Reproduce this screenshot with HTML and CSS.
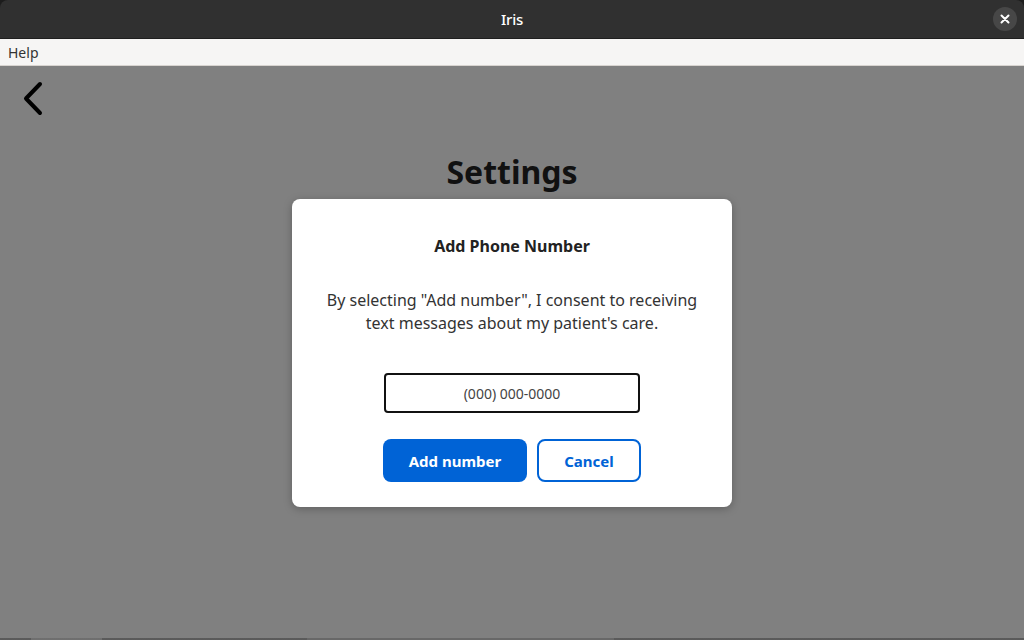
FILE: index.html
```html
<!DOCTYPE html>
<html>
<head>
<meta charset="utf-8">
<link rel="stylesheet" href="styles.css">
</head>
<body>
<div class="window">
  <header class="titlebar">
    <span class="title">Iris</span>
    <button class="close" aria-label="Close">
      <svg width="10" height="10" viewBox="0 0 10 10"><path d="M1.5 1.5 L8.5 8.5 M8.5 1.5 L1.5 8.5" stroke="#fff" stroke-width="2" stroke-linecap="round"/></svg>
    </button>
  </header>
  <nav class="menubar"><span class="menu-item">Help</span></nav>
  <main class="content">
    <div class="page">
      <button class="back" aria-label="Back">
        <svg width="28" height="38" viewBox="0 0 28 38"><path d="M20 4 L6 18.5 L20 33" fill="none" stroke="#000" stroke-width="4" stroke-linecap="round" stroke-linejoin="round"/></svg>
      </button>
      <h1 class="page-title">Settings</h1>
    </div>
    <div class="overlay">
      <div class="dialog">
        <h2 class="dialog-title">Add Phone Number</h2>
        <p class="dialog-text">By selecting "Add number", I consent to receiving text messages about my patient's care.</p>
        <input class="phone" type="text" placeholder="(000) 000-0000">
        <div class="actions">
          <button class="btn btn-primary">Add number</button>
          <button class="btn btn-secondary">Cancel</button>
        </div>
      </div>
    </div>
    <div class="bottom-strip"></div>
  </main>
</div>
</body>
</html>
```
FILE: styles.css
```css
* { box-sizing: border-box; }
html, body { margin: 0; padding: 0; }
body {
  width: 1024px;
  height: 640px;
  overflow: hidden;
  background: #1c1c1c;
  font-family: "Noto Sans", sans-serif;
}
.window {
  display: flex;
  flex-direction: column;
  height: 640px;
}
.titlebar {
  position: relative;
  height: 39px;
  background: #303030;
  border-radius: 8px 8px 0 0;
  border-bottom: 1px solid #1f1f1f;
  display: flex;
  align-items: center;
  justify-content: center;
}
.title {
  color: #ffffff;
  font-family: "Noto Sans", sans-serif;
  font-weight: 500;
  font-size: 15px;
  letter-spacing: -0.2px;
}
.close {
  position: absolute;
  right: 7px;
  top: 7px;
  width: 24px;
  height: 24px;
  border-radius: 50%;
  border: none;
  background: #474747;
  padding: 0;
  display: flex;
  align-items: center;
  justify-content: center;
}
.menubar {
  height: 27px;
  background: #f6f5f4;
  border-bottom: 1px solid #d8d4d0;
  display: flex;
  align-items: center;
  padding-left: 8px;
}
.menu-item {
  font-size: 14px;
  color: #333333;
}
.content {
  position: relative;
  flex: 1;
  background: #808080;
  display: flex;
  flex-direction: column;
}
.page {
  display: flex;
  flex-direction: column;
  align-items: center;
}
.back {
  align-self: flex-start;
  margin: 14px 0 0 20px;
  width: 28px;
  height: 38px;
  padding: 0;
  border: none;
  background: transparent;
  display: flex;
  align-items: center;
  justify-content: center;
}
.page-title {
  margin: 32px 0 0;
  font-size: 32px;
  font-weight: 700;
  line-height: 44px;
  color: #111111;
}
.overlay {
  position: absolute;
  inset: 0;
  display: flex;
  align-items: center;
  justify-content: center;
}
.dialog {
  width: 440px;
  background: #ffffff;
  border-radius: 8px;
  box-shadow: 0 2px 8px rgba(0,0,0,0.25);
  padding: 35px 32px 25px;
  display: flex;
  flex-direction: column;
  align-items: center;
  text-align: center;
}
.dialog-title {
  margin: 0;
  font-size: 16px;
  line-height: 24px;
  font-weight: 700;
  color: #222222;
}
.dialog-text {
  margin: 31px 0 0;
  font-size: 16px;
  line-height: 23px;
  color: #333333;
}
.phone {
  margin-top: 38px;
  width: 256px;
  height: 40px;
  border: 2px solid #111111;
  border-radius: 4px;
  text-align: center;
  font-family: "Noto Sans", sans-serif;
  font-size: 14px;
  color: #333;
  outline: none;
}
.phone::placeholder { color: #444444; }
.actions {
  margin-top: 26px;
  display: flex;
  gap: 10px;
}
.btn {
  height: 43px;
  border-radius: 8px;
  font-family: "Noto Sans", sans-serif;
  font-size: 15px;
  font-weight: 700;
  padding: 0;
  padding-top: 1px;
}
.btn-primary {
  width: 144px;
  background: #0063d6;
  border: none;
  color: #ffffff;
}
.btn-secondary {
  width: 104px;
  background: #ffffff;
  border: 2px solid #0063d6;
  color: #0063d6;
}
.bottom-strip {
  margin-top: auto;
  height: 2px;
  background: linear-gradient(90deg, #222 0 3%, #555 3% 10%, #222 10% 30%, #444 30% 60%, #222 60%);
  opacity: 0.4;
}
```
